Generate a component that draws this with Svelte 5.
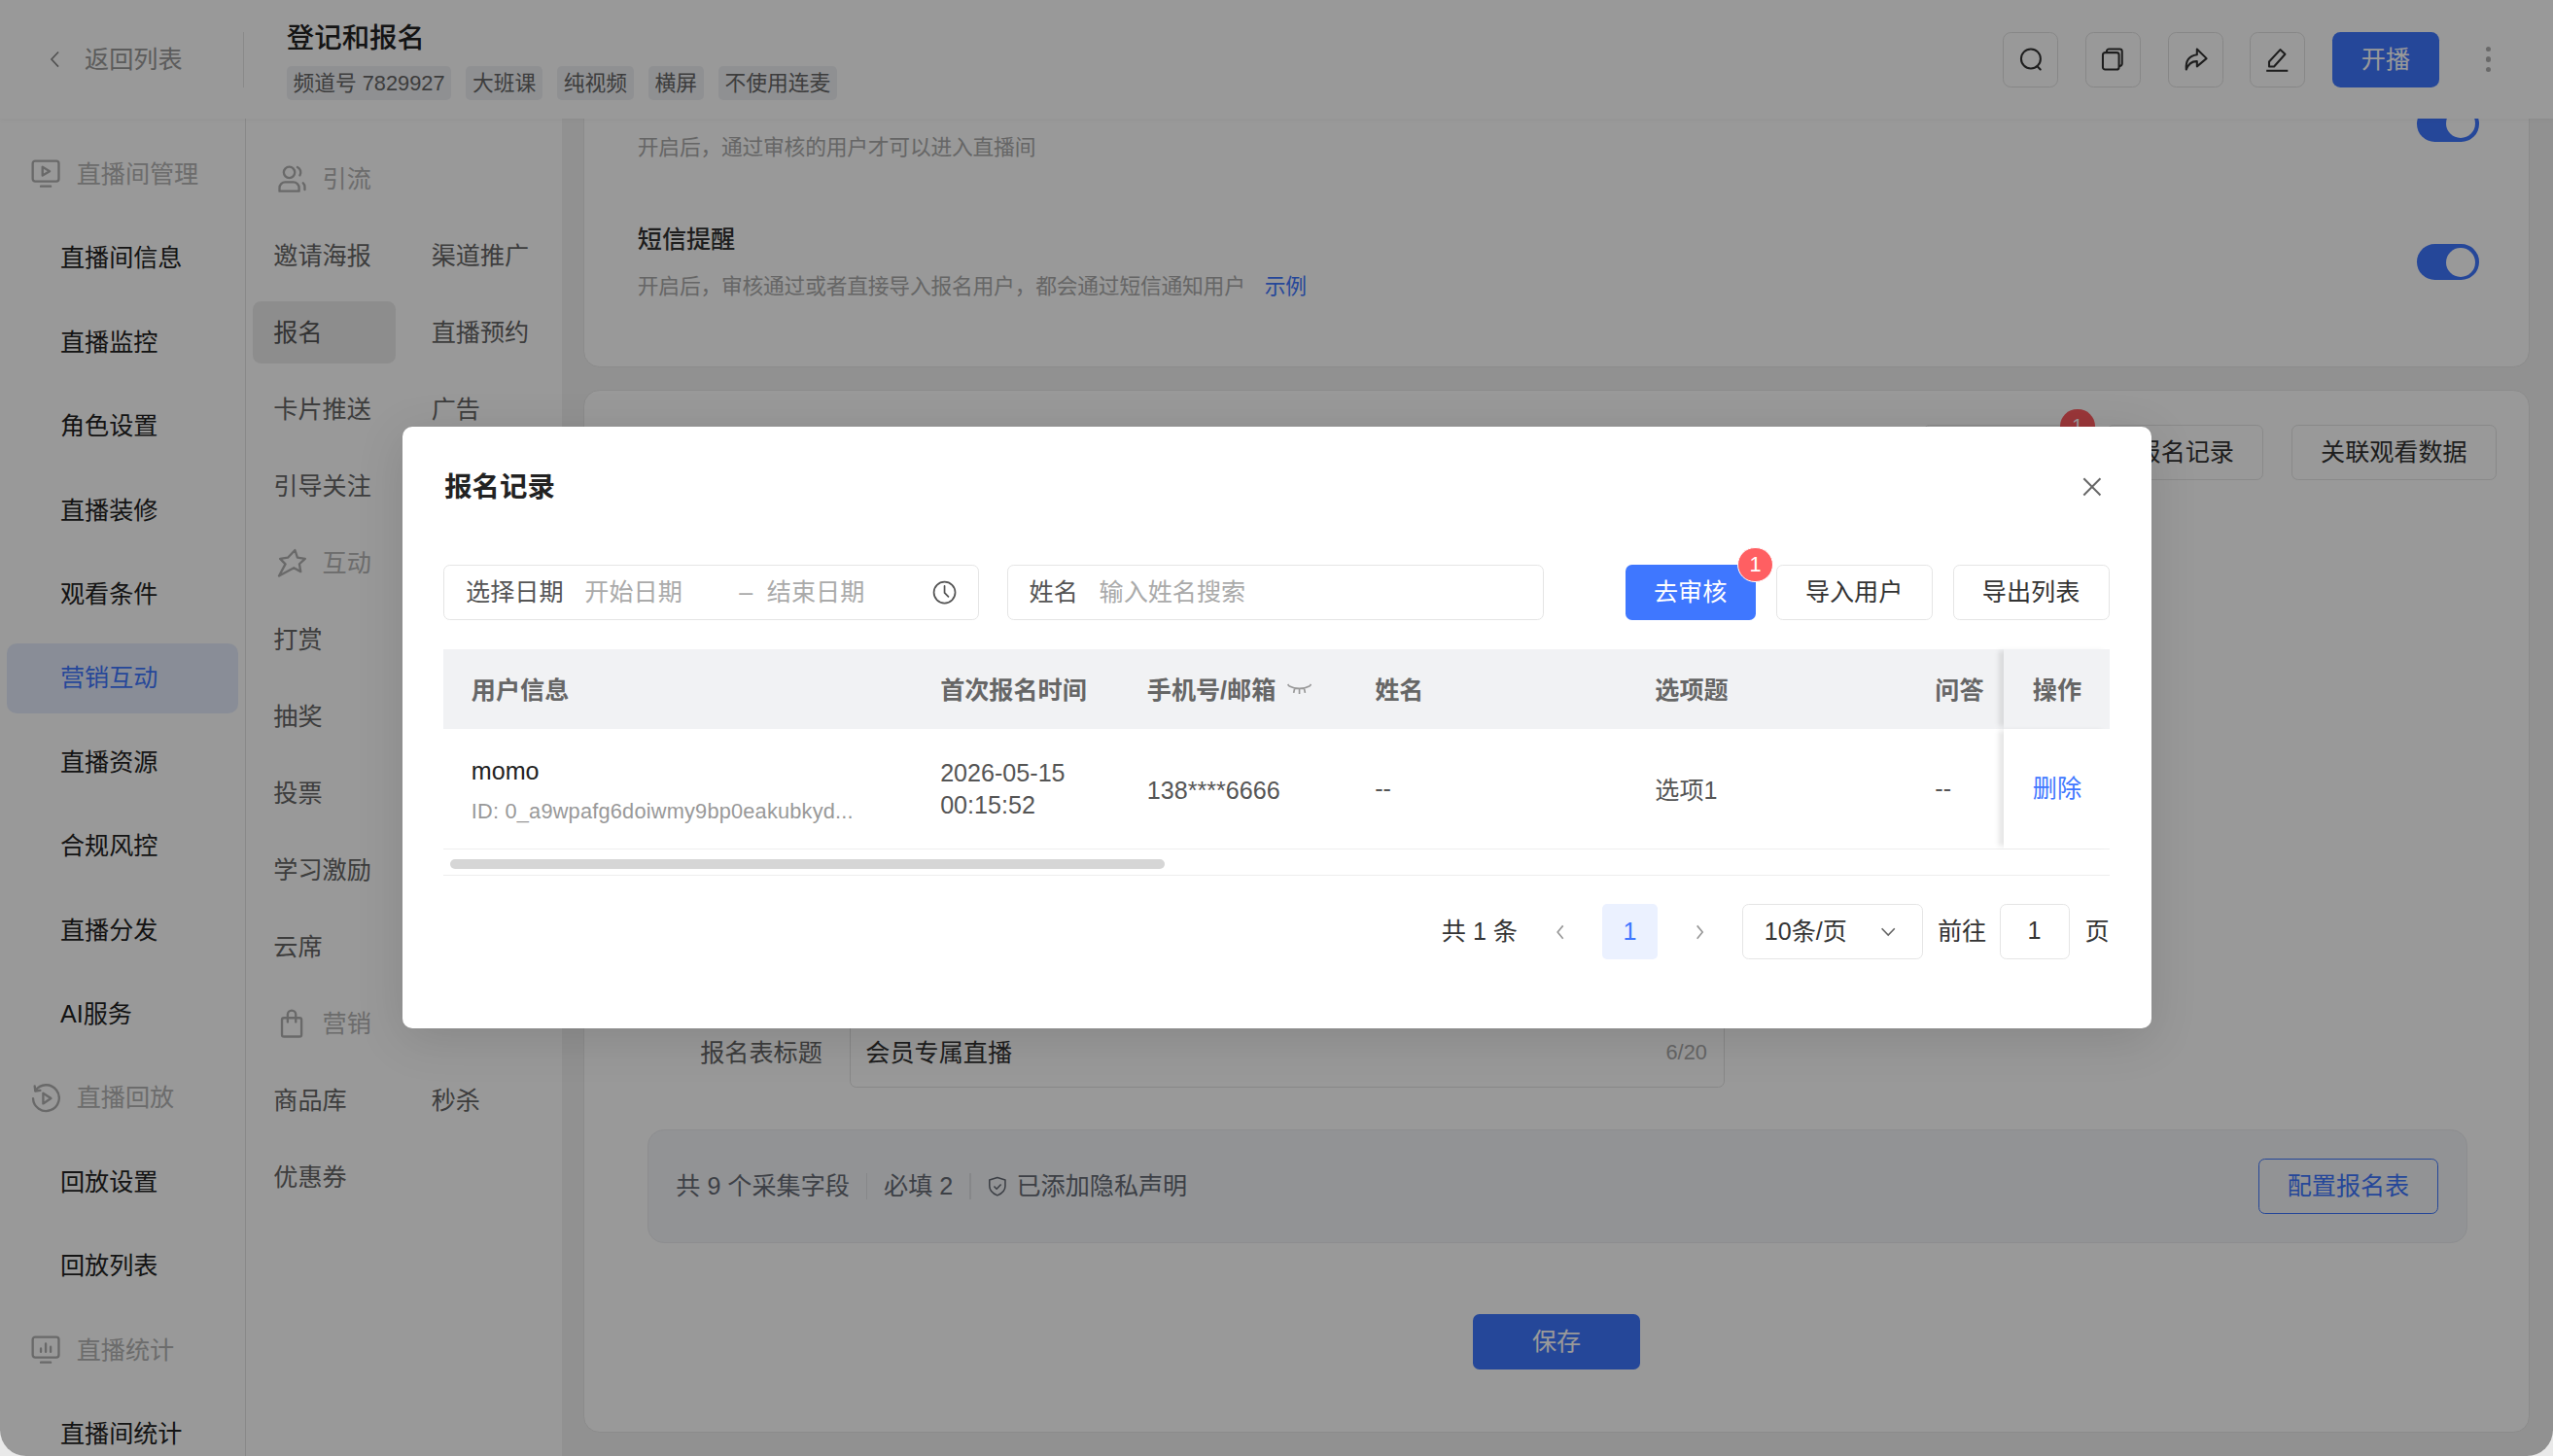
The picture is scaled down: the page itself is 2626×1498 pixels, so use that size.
<script>
  const nav1 = [
    { t: '直播间管理', g: 'screen' }, { t: '直播间信息' }, { t: '直播监控' }, { t: '角色设置' }, { t: '直播装修' },
    { t: '观看条件' }, { t: '营销互动', active: true }, { t: '直播资源' }, { t: '合规风控' }, { t: '直播分发' },
    { t: 'AI服务' }, { t: '直播回放', g: 'replay' }, { t: '回放设置' }, { t: '回放列表' },
    { t: '直播统计', g: 'stats' }, { t: '直播间统计' }
  ];
  const nav2 = [
    { t: '引流', g: 'users' }, { t: '邀请海报' }, { t: '渠道推广' }, { t: '报名', active: true }, { t: '直播预约' },
    { t: '卡片推送' }, { t: '广告' }, { t: '引导关注' }, { t: '', blank: true }, { t: '互动', g: 'star' },
    { t: '打赏' }, { t: '', blank: true }, { t: '抽奖' }, { t: '', blank: true }, { t: '投票' }, { t: '', blank: true },
    { t: '学习激励' }, { t: '', blank: true }, { t: '云席' }, { t: '', blank: true }, { t: '营销', g: 'bag' },
    { t: '商品库' }, { t: '秒杀' }, { t: '优惠券' }
  ];
  const tags = ['频道号 7829927', '大班课', '纯视频', '横屏', '不使用连麦'];
  const heads = ['用户信息', '首次报名时间', '手机号/邮箱', '姓名', '选项题', '问答', '操作'];
</script>

{#snippet glyph(name)}
  <svg class="gicon" viewBox="0 0 18 18" fill="none" stroke="currentColor" stroke-width="1.4" stroke-linecap="round" stroke-linejoin="round">
    {#if name === 'screen'}
      <rect x="1" y="1" width="16" height="12.5" rx="1.5" /><path d="M7 4.6v5.3l4.4-2.65z" /><path d="M6 16.5h6" />
    {:else if name === 'replay'}
      <path d="M2.6 4.2A8 8 0 1 1 1.2 9" /><path d="M2.2 1.5l.4 3 3-.4" /><path d="M7.4 5.8v6.4l4.8-3.2z" />
    {:else if name === 'stats'}
      <rect x="1" y="1" width="16" height="12.5" rx="1.5" /><path d="M6 10V8M9 10V5M12 10V7" /><path d="M6 16.5h6" />
    {:else if name === 'users'}
      <circle cx="7.5" cy="5" r="3.4" /><path d="M1.5 16.5v-2a3.5 3.5 0 0 1 3.5-3.5h5a3.5 3.5 0 0 1 3.5 3.5v2z" /><path d="M12.5 1.8a3.5 3.5 0 0 1 1.5 5" /><path d="M16 11.5a3 3 0 0 1 1 2.5v1.5" />
    {:else if name === 'star'}
      <path d="M11 1.2l1.5 4.6 4.7.7-3.5 3.2.8 4.7-4.2-2.3L1.2 17l3.9-7.2-3.2-3.3 4.7-.7z" />
    {:else if name === 'bag'}
      <rect x="3" y="5.5" width="12" height="11.5" rx="1.2" /><path d="M6.5 8V3.5a2.500 2.500 0 0 1 5 0V8" />
    {/if}
  </svg>
{/snippet}

<div class="page">
  <header class="top">
    <div class="back">
      <svg class="chev" viewBox="0 0 8 12" fill="none" stroke="currentColor" stroke-width="1"><path d="M6 1.5L1.8 6 6 10.5" /></svg>
      <span>返回列表</span>
    </div>
    <div class="head-main">
      <div class="title">登记和报名</div>
      <div class="tags">
        {#each tags as tag}<span class="tag">{tag}</span>{/each}
      </div>
    </div>
    <div class="tools">
      <button class="tool" aria-label="搜索">
        <svg viewBox="0 0 18 18" fill="none" stroke="currentColor" stroke-width="1.3" stroke-linecap="round"><circle cx="8.8" cy="8.5" r="6.3" /><path d="M13 13.5l2 2" /></svg>
      </button>
      <button class="tool" aria-label="复制">
        <svg viewBox="0 0 18 18" fill="none" stroke="currentColor" stroke-width="1.3"><rect x="2.5" y="4.5" width="10.5" height="11" rx="1.5" /><path d="M5 4.5V3.7A1.5 1.5 0 0 1 6.5 2.2h7A1.5 1.5 0 0 1 15 3.7v8a1.5 1.5 0 0 1-1.5 1.5H13" /></svg>
      </button>
      <button class="tool" aria-label="分享">
        <svg viewBox="0 0 18 18" fill="none" stroke="currentColor" stroke-width="1.3" stroke-linejoin="round"><path d="M10 2.2l6.2 6.1-6.2 5.2v-3.3c-3.2-.2-5.3 1-7 5.300-.5-5.600 2-9 7-9.700z" /></svg>
      </button>
      <button class="tool" aria-label="编辑">
        <svg viewBox="0 0 18 18" fill="none" stroke="currentColor" stroke-width="1.3" stroke-linejoin="round"><path d="M3.8 13.6v-3.2l7.2-7.800 3.200 2.900-7.200 8.100z" /><path d="M2 16.3h14" /></svg>
      </button>
      <button class="btn primary start">开播</button>
      <div class="dots"><i></i><i></i><i></i></div>
    </div>
  </header>

  <div class="body">
    <nav class="nav-a">
      {#each nav1 as item}
        {#if item.g}
          <div class="a-group">{@render glyph(item.g)}<span>{item.t}</span></div>
        {:else}
          <div class="a-item" class:active={item.active}>{item.t}</div>
        {/if}
      {/each}
    </nav>

    <nav class="nav-b">
      {#each nav2 as item}
        {#if item.g}
          <div class="b-group">{@render glyph(item.g)}<span>{item.t}</span></div>
        {:else if item.blank}
          <div></div>
        {:else}
          <div class="b-item" class:active={item.active}>{item.t}</div>
        {/if}
      {/each}
    </nav>

    <main class="content">
      <section class="card first">
        <div class="set-row">
          <div class="set-text">
            <div class="set-title"></div>
            <div class="set-desc">开启后，通过审核的用户才可以进入直播间</div>
          </div>
          <div class="toggle"><i></i></div>
        </div>
        <div class="set-row">
          <div class="set-text">
            <div class="set-title">短信提醒</div>
            <div class="set-desc">开启后，审核通过或者直接导入报名用户，都会通过短信通知用户<a class="sample">示例</a></div>
          </div>
          <div class="toggle"><i></i></div>
        </div>
      </section>

      <section class="card second">
        <div class="card-actions">
          <div class="btn plain hidden-btn"><span class="under-badge">1</span></div>
          <button class="btn plain">报名记录</button>
          <button class="btn plain">关联观看数据</button>
        </div>
        <div class="form-row">
          <span class="form-label">报名表标题</span>
          <div class="form-input"><span>会员专属直播</span><em>6/20</em></div>
        </div>
        <div class="info">
          <span>共 9 个采集字段</span><b></b><span>必填 2</span><b></b>
          <svg class="shield" viewBox="0 0 14 14" fill="none" stroke="currentColor" stroke-width="1" stroke-linejoin="round"><path d="M7 1l5.2 1.6v4c0 3-2.2 5-5.2 6.2-3-1.2-5.2-3.2-5.2-6.2v-4z" /><path d="M4.8 6.8L6.5 8.5l2.9-3" /></svg>
          <span class="privacy">已添加隐私声明</span>
          <button class="btn outline">配置报名表</button>
        </div>
        <button class="btn primary save">保存</button>
      </section>
    </main>
  </div>

  <div class="mask">
    <div class="modal">
      <div class="modal-head">
        <h2>报名记录</h2>
        <svg class="close" viewBox="0 0 14 14" fill="none" stroke="currentColor" stroke-width="1.3"><path d="M1.5 1.5l11 11M12.5 1.5l-11 11" /></svg>
      </div>

      <div class="filters">
        <div class="field date">
          <span class="lab">选择日期</span>
          <span class="ph">开始日期</span>
          <span class="dash">–</span>
          <span class="ph">结束日期</span>
          <svg class="clock" viewBox="0 0 16 16" fill="none" stroke="currentColor" stroke-width="1.1" stroke-linecap="round"><circle cx="8" cy="8" r="7" /><path d="M8 3.8v4.4l2.5 2.6" /></svg>
        </div>
        <div class="field name">
          <span class="lab">姓名</span>
          <span class="ph">输入姓名搜索</span>
        </div>
        <div class="filter-btns">
          <button class="btn primary review">去审核<span class="badge">1</span></button>
          <button class="btn plain">导入用户</button>
          <button class="btn plain">导出列表</button>
        </div>
      </div>

      <div class="table">
        <div class="tr thead">
          {#each heads as h, i}
            <div class="td" class:fixed={i === 6}>
              {h}
              {#if i === 2}
                <svg class="eye" viewBox="0 0 15 9" fill="none" stroke="currentColor" stroke-width="1"><path d="M1 2.2Q7.5 5.500 14 2.2M1 2.2l-.6-1M14 2.2l.6-1M4.600 3.600L4 6.500M7.500 4.200v3M10.400 3.600L11 6.500" /></svg>
              {/if}
            </div>
          {/each}
        </div>
        <div class="tr tbody">
          <div class="td user">
            <div class="uname">momo</div>
            <div class="uid">ID: 0_a9wpafg6doiwmy9bp0eakubkyd...</div>
          </div>
          <div class="td when">2026-05-15<br />00:15:52</div>
          <div class="td phone">138****6666</div>
          <div class="td">--</div>
          <div class="td opt">选项1</div>
          <div class="td">--</div>
          <div class="td fixed"><a class="del">删除</a></div>
        </div>
        <div class="scroll"><i></i></div>
      </div>

      <div class="pager">
        <span>共 1 条</span>
        <span class="pg-arrow"><svg viewBox="0 0 8 12" fill="none" stroke="currentColor" stroke-width="1"><path d="M5.8 2L2.5 6l3.3 4" /></svg></span>
        <span class="pg-cur">1</span>
        <span class="pg-arrow"><svg viewBox="0 0 8 12" fill="none" stroke="currentColor" stroke-width="1"><path d="M2.2 2l3.3 4-3.3 4" /></svg></span>
        <div class="pg-size">
          <span>10条/页</span>
          <svg viewBox="0 0 12 8" fill="none" stroke="currentColor" stroke-width="1.1"><path d="M1.5 1.5L6 6.2l4.500-4.700" /></svg>
        </div>
        <span>前往</span>
        <span class="pg-input">1</span>
        <span class="pg-last">页</span>
      </div>
    </div>
  </div>
</div>

<style>
  :global(body) {
    margin: 0;
    background: #e9e9e9;
  }
  .page {
    zoom: 1.6747;
    position: relative;
    width: 1568px;
    height: 894.4px;
    display: flex;
    flex-direction: column;
    overflow: hidden;
    border-radius: 0 0 16px 16px;
    background: #fff;
    color: #333;
    font-family: "Liberation Sans", "Noto Sans CJK SC", sans-serif;
    font-size: 15px;
    line-height: 22px;
  }
  button {
    font: inherit;
    padding: 0;
    margin: 0;
    cursor: pointer;
  }

  /* header */
  .top {
    position: relative;
    z-index: 2;
    flex: 0 0 73px;
    display: flex;
    align-items: center;
    background: #fff;
    box-shadow: 0 1px 4px rgba(0, 0, 0, 0.04);
  }
  .back {
    width: 150px;
    height: 34px;
    box-sizing: border-box;
    display: flex;
    align-items: center;
    gap: 14px;
    padding-left: 30px;
    color: #999;
    border-right: 1px solid #e4e4e4;
  }
  .chev {
    width: 8px;
    height: 12px;
    color: #888;
  }
  .head-main {
    margin-left: 26px;
  }
  .title {
    font-size: 17px;
    line-height: 24px;
    color: #222;
    font-weight: 500;
  }
  .tags {
    display: flex;
    gap: 9px;
    margin-top: 5px;
  }
  .tag {
    height: 21px;
    line-height: 21px;
    padding: 0 4px;
    border-radius: 3px;
    font-size: 13px;
    color: #666;
    background: #eff0f4;
  }
  .tools {
    margin-left: auto;
    display: flex;
    align-items: center;
    gap: 16.5px;
    padding-right: 38px;
  }
  .tool {
    width: 34px;
    height: 34px;
    display: flex;
    align-items: center;
    justify-content: center;
    background: #fff;
    border: 1px solid #e2e2e2;
    border-radius: 5px;
    color: #333;
  }
  .tool svg {
    width: 17px;
    height: 17px;
  }
  .dots {
    display: flex;
    flex-direction: column;
    gap: 3.2px;
    margin-left: 12px;
  }
  .dots i {
    width: 3.2px;
    height: 3.2px;
    border-radius: 50%;
    background: #b0b0b0;
  }

  /* buttons */
  .btn {
    height: 34px;
    border-radius: 4px;
    box-sizing: border-box;
    white-space: nowrap;
  }
  .primary {
    background: #3f77ff;
    color: #fff;
    border: 0;
  }
  .plain {
    position: relative;
    padding: 0 17.5px;
    background: #fff;
    color: #333;
    border: 1px solid #e5e5e5;
  }
  .start {
    width: 66px;
    border-radius: 5px;
  }

  /* layout */
  .body {
    flex: 1;
    min-height: 0;
    display: flex;
  }
  .nav-a {
    flex: 0 0 151px;
    box-sizing: border-box;
    padding: 12.7px 4px 0;
    border-right: 1px solid #e5e5e5;
    background: #fff;
  }
  .a-group,
  .a-item {
    height: 43px;
    margin-bottom: 8.6px;
    display: flex;
    align-items: center;
    border-radius: 6px;
  }
  .a-group {
    color: #b4b4b4;
    padding-left: 15px;
    gap: 10px;
  }
  .a-item {
    color: #222;
    padding-left: 33px;
  }
  .a-item.active {
    background: #e5ecfc;
    color: #3f77ff;
  }
  .gicon {
    width: 18px;
    height: 18px;
    flex: none;
    color: #b0b0b0;
  }
  .nav-b {
    flex: 0 0 194px;
    box-sizing: border-box;
    padding: 18px 0 0 4px;
    display: grid;
    grid-template-columns: 88px 88px;
    grid-auto-rows: 38px;
    column-gap: 9px;
    row-gap: 9.2px;
    align-content: start;
    background: #fff;
  }
  .b-group {
    grid-column: 1 / -1;
    display: flex;
    align-items: center;
    gap: 10px;
    padding-left: 15px;
    color: #b4b4b4;
  }
  .b-item {
    display: flex;
    align-items: center;
    padding-left: 13px;
    border-radius: 5px;
    color: #666;
  }
  .b-item.active {
    background: #ececec;
    color: #555;
  }
  .content {
    flex: 1;
    min-width: 0;
    display: flex;
    flex-direction: column;
    justify-content: flex-end;
    gap: 14px;
    padding: 0 14px 14px 13px;
    background: #f2f2f2;
    overflow: hidden;
  }
  .card {
    flex: none;
    background: #fff;
    border: 1px solid #e8e8e8;
    border-radius: 10px;
    box-sizing: border-box;
  }

  /* first card */
  .first {
    height: 200px;
    padding: 7.5px 31px 0 33px;
  }
  .set-row {
    height: 85px;
    display: flex;
    align-items: center;
    justify-content: space-between;
  }
  .set-text {
    margin-top: -1px;
  }
  .set-title {
    color: #333;
    height: 22px;
    line-height: 22px;
    font-weight: 500;
  }
  .set-desc {
    margin-top: 9px;
    font-size: 13px;
    line-height: 18px;
    color: #aaa;
    letter-spacing: -0.13px;
  }
  .sample {
    margin-left: 12px;
    color: #3f77ff;
  }
  .toggle {
    width: 38px;
    height: 22px;
    border-radius: 11px;
    background: #3f77ff;
    position: relative;
  }
  .toggle i {
    position: absolute;
    right: 2px;
    top: 2px;
    width: 18px;
    height: 18px;
    border-radius: 50%;
    background: #fff;
  }

  /* second card */
  .second {
    height: 641px;
    display: flex;
    flex-direction: column;
  }
  .card-actions {
    display: flex;
    justify-content: flex-end;
    gap: 17px;
    padding: 21px 20px 0 0;
  }
  .hidden-btn {
    width: 96px;
  }
  .under-badge {
    position: absolute;
    right: -10px;
    top: -10px;
    width: 21px;
    height: 21px;
    border-radius: 50%;
    background: #ff5a5f;
    color: #fff;
    font-size: 12px;
    line-height: 21px;
    text-align: center;
  }
  .form-row {
    margin: 331px 0 0 71.5px;
    display: flex;
    align-items: center;
    gap: 17px;
    color: #666;
  }
  .form-input {
    width: 537px;
    height: 42px;
    box-sizing: border-box;
    padding: 0 10px 0 9px;
    display: flex;
    align-items: center;
    justify-content: space-between;
    border: 1px solid #e2e2e2;
    border-radius: 4px;
    color: #333;
  }
  .form-input em {
    font-style: normal;
    font-size: 13px;
    color: #aaa;
  }
  .info {
    margin: 26px 38px 0 39px;
    height: 70px;
    box-sizing: border-box;
    padding: 0 17px;
    display: flex;
    align-items: center;
    border: 1px solid #ebecef;
    border-radius: 10px;
    background: #f3f5f8;
    color: #666b75;
  }
  .info b {
    width: 1px;
    height: 16px;
    margin: 0 10px;
    background: #e0e1e5;
  }
  .shield {
    width: 13px;
    height: 13px;
    margin-right: 5px;
  }
  .outline {
    margin-left: auto;
    width: 111px;
    background: transparent;
    color: #3f77ff;
    border: 1px solid #3f77ff;
  }
  .save {
    align-self: center;
    width: 103px;
    margin-top: 43.5px;
  }

  /* modal */
  .mask {
    position: absolute;
    inset: 0;
    z-index: 5;
    display: flex;
    align-items: center;
    justify-content: center;
    background: rgba(0, 0, 0, 0.4);
  }
  .modal {
    width: 1074px;
    height: 370px;
    box-sizing: border-box;
    padding: 25px 26px 0 25px;
    background: #fff;
    border-radius: 6px;
    box-shadow: 0 6px 30px rgba(0, 0, 0, 0.12);
    margin: -0.5px 0 0 1px;
  }
  .modal-head {
    display: flex;
    align-items: center;
    justify-content: space-between;
    height: 24px;
  }
  h2 {
    margin: 0 0 0 0.5px;
    font-size: 17px;
    line-height: 24px;
    font-weight: 700;
    color: #222;
  }
  .close {
    width: 13px;
    height: 13px;
    margin-right: 4px;
    color: #666;
  }
  .filters {
    margin-top: 36px;
    display: flex;
    gap: 17px;
  }
  .field {
    height: 34px;
    width: 329px;
    box-sizing: border-box;
    display: flex;
    align-items: center;
    padding-left: 13px;
    border: 1px solid #e5e5e5;
    border-radius: 4px;
  }
  .field.name {
    width: 330px;
  }
  .lab {
    color: #555;
    margin-right: 13px;
  }
  .ph {
    color: #aaa;
  }
  .dash {
    width: 8px;
    margin: 0 9px 0 35px;
    color: #aaa;
  }
  .clock {
    width: 15px;
    height: 15px;
    margin-left: auto;
    margin-right: 13px;
    color: #555;
  }
  .filter-btns {
    margin-left: auto;
    display: flex;
    gap: 12.5px;
  }
  .review {
    position: relative;
    width: 80px;
  }
  .badge {
    position: absolute;
    right: -11px;
    top: -11px;
    width: 22px;
    height: 22px;
    box-sizing: border-box;
    border: 1px solid #fff;
    border-radius: 50%;
    background: #ff5f62;
    color: #fff;
    font-size: 13px;
    line-height: 20px;
    text-align: center;
  }

  /* table */
  .table {
    margin-top: 18px;
  }
  .tr {
    display: grid;
    grid-template-columns: 288px 127px 140px 172px 172px 59px 65px;
    align-items: stretch;
  }
  .td {
    display: flex;
    align-items: center;
    padding-left: 17px;
    color: #555;
    min-width: 0;
  }
  .td.fixed {
    padding-left: 18px;
    box-shadow: -4px 0 3px -1px rgba(0, 0, 0, 0.1);
    position: relative;
  }
  .thead {
    height: 49px;
    background: #f1f2f4;
  }
  .thead .td {
    font-weight: 600;
    color: #666;
    padding-top: 1px;
  }
  .thead .fixed {
    background: #f1f2f4;
  }
  .tbody {
    height: 74px;
    box-sizing: border-box;
    border-bottom: 1px solid #eee;
  }
  .tbody .fixed {
    background: #fff;
  }
  .user {
    display: block;
    padding-top: 15px;
  }
  .uname {
    color: #222;
  }
  .uid {
    margin-top: 3px;
    font-size: 13px;
    color: #999;
    white-space: nowrap;
    letter-spacing: 0.12px;
  }
  .when {
    display: block;
    padding-top: 17px;
    line-height: 20px;
  }
  .phone,
  .opt {
    padding-top: 2px;
  }
  .eye {
    width: 15px;
    height: 9px;
    margin-left: 7px;
    color: #999;
  }
  .del {
    color: #3f77ff;
  }
  .scroll {
    height: 16px;
    padding: 6px 0 0 4px;
    box-sizing: border-box;
    border-bottom: 1px solid #eee;
  }
  .scroll i {
    display: block;
    width: 439px;
    height: 6px;
    border-radius: 3px;
    background: #d6d6d6;
  }

  /* pager */
  .pager {
    margin-top: 17.5px;
    display: flex;
    justify-content: flex-end;
    align-items: center;
    gap: 9px;
    color: #333;
  }
  .pg-arrow {
    width: 34px;
    height: 34px;
    display: flex;
    align-items: center;
    justify-content: center;
    color: #999;
  }
  .pg-arrow svg {
    width: 8px;
    height: 12px;
  }
  .pg-cur {
    width: 34px;
    height: 34px;
    line-height: 34px;
    text-align: center;
    border-radius: 3px;
    background: #ebf1ff;
    color: #3f77ff;
  }
  .pg-size {
    width: 111px;
    height: 34px;
    box-sizing: border-box;
    padding: 0 15px 0 13px;
    display: flex;
    align-items: center;
    justify-content: space-between;
    border: 1px solid #e5e5e5;
    border-radius: 4px;
  }
  .pg-size svg {
    width: 11px;
    height: 7px;
    color: #666;
  }
  .pg-input {
    width: 43px;
    height: 34px;
    box-sizing: border-box;
    line-height: 32px;
    text-align: center;
    border: 1px solid #e5e5e5;
    border-radius: 4px;
    margin-left: -1px;
  }
  .pg-last {
    margin-left: 0.5px;
  }
</style>
